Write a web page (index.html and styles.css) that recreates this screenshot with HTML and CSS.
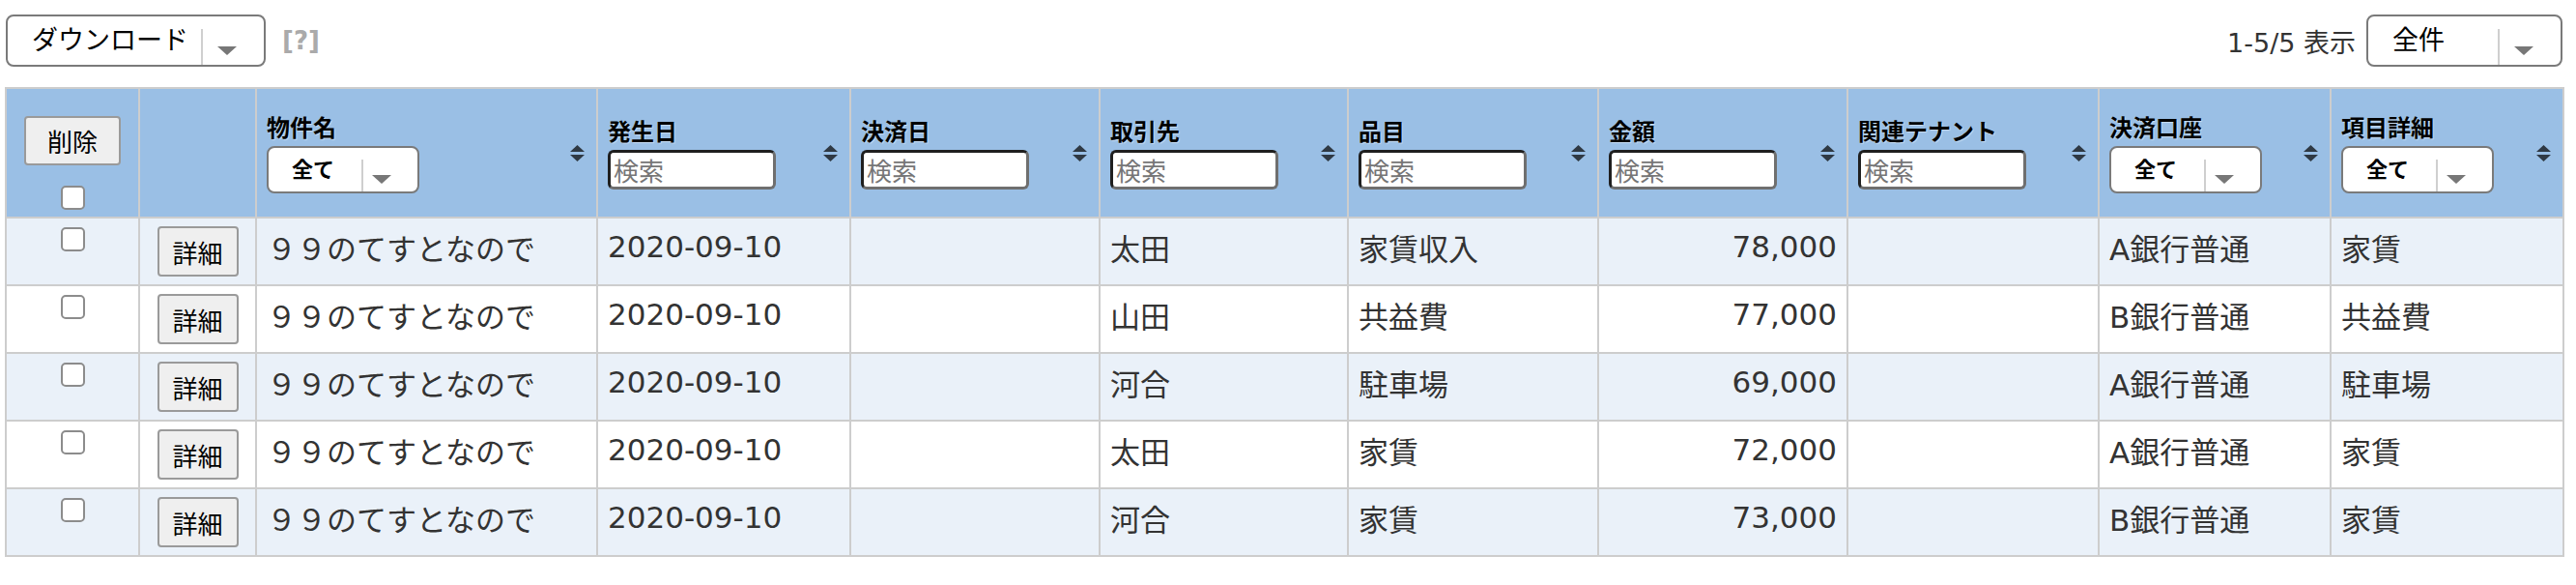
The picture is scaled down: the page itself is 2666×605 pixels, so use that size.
FILE: index.html
```html
<!DOCTYPE html>
<html lang="ja">
<head>
<meta charset="utf-8">
<title>一覧</title>
<link rel="stylesheet" href="styles.css">
</head>
<body>
<div class="page">
  <div class="toolbar">
    <div class="tb-left">
      <div class="dropdown dl"><span class="dd-text">ダウンロード</span><span class="dd-arrow"></span></div>
      <span class="help">[?]</span>
    </div>
    <div class="tb-right">
      <span class="count">1-5/5 表示</span>
      <div class="dropdown all"><span class="dd-text">全件</span><span class="dd-arrow"></span></div>
    </div>
  </div>

  <table class="grid">
    <colgroup>
      <col class="w1"><col class="w2"><col class="w3"><col class="w4"><col class="w5"><col class="w6">
      <col class="w7"><col class="w8"><col class="w9"><col class="w10"><col class="w11">
    </colgroup>
    <thead>
      <tr>
        <th class="c-check"><div class="check-stack"><button class="btn btn-del">削除</button><input type="checkbox" class="cb"></div></th>
        <th></th>
        <th><div class="th-inner"><div class="filter"><span class="label">物件名</span><div class="sel"><span class="sel-text">全て</span><span class="sel-arrow"></span></div></div><svg class="sort" width="15" height="17" viewBox="0 0 15 17"><polygon points="0,7 7.5,0 15,7"/><polygon points="0,10 7.5,17 15,10"/></svg></div></th>
        <th><div class="th-inner"><div class="filter"><span class="label">発生日</span><input class="search" placeholder="検索"></div><svg class="sort" width="15" height="17" viewBox="0 0 15 17"><polygon points="0,7 7.5,0 15,7"/><polygon points="0,10 7.5,17 15,10"/></svg></div></th>
        <th><div class="th-inner"><div class="filter"><span class="label">決済日</span><input class="search" placeholder="検索"></div><svg class="sort" width="15" height="17" viewBox="0 0 15 17"><polygon points="0,7 7.5,0 15,7"/><polygon points="0,10 7.5,17 15,10"/></svg></div></th>
        <th><div class="th-inner"><div class="filter"><span class="label">取引先</span><input class="search" placeholder="検索"></div><svg class="sort" width="15" height="17" viewBox="0 0 15 17"><polygon points="0,7 7.5,0 15,7"/><polygon points="0,10 7.5,17 15,10"/></svg></div></th>
        <th><div class="th-inner"><div class="filter"><span class="label">品目</span><input class="search" placeholder="検索"></div><svg class="sort" width="15" height="17" viewBox="0 0 15 17"><polygon points="0,7 7.5,0 15,7"/><polygon points="0,10 7.5,17 15,10"/></svg></div></th>
        <th><div class="th-inner"><div class="filter"><span class="label">金額</span><input class="search" placeholder="検索"></div><svg class="sort" width="15" height="17" viewBox="0 0 15 17"><polygon points="0,7 7.5,0 15,7"/><polygon points="0,10 7.5,17 15,10"/></svg></div></th>
        <th><div class="th-inner"><div class="filter"><span class="label">関連テナント</span><input class="search" placeholder="検索"></div><svg class="sort" width="15" height="17" viewBox="0 0 15 17"><polygon points="0,7 7.5,0 15,7"/><polygon points="0,10 7.5,17 15,10"/></svg></div></th>
        <th><div class="th-inner"><div class="filter"><span class="label">決済口座</span><div class="sel"><span class="sel-text">全て</span><span class="sel-arrow"></span></div></div><svg class="sort" width="15" height="17" viewBox="0 0 15 17"><polygon points="0,7 7.5,0 15,7"/><polygon points="0,10 7.5,17 15,10"/></svg></div></th>
        <th><div class="th-inner"><div class="filter"><span class="label">項目詳細</span><div class="sel"><span class="sel-text">全て</span><span class="sel-arrow"></span></div></div><svg class="sort" width="15" height="17" viewBox="0 0 15 17"><polygon points="0,7 7.5,0 15,7"/><polygon points="0,10 7.5,17 15,10"/></svg></div></th>
      </tr>
    </thead>
    <tbody>
      <tr>
        <td class="c-check"><input type="checkbox" class="cb"></td>
        <td class="c-btn"><button class="btn btn-detail">詳細</button></td>
        <td>９９のてすとなので</td><td>2020-09-10</td><td></td><td>太田</td><td>家賃収入</td><td class="num">78,000</td><td></td><td>A銀行普通</td><td>家賃</td>
      </tr>
      <tr>
        <td class="c-check"><input type="checkbox" class="cb"></td>
        <td class="c-btn"><button class="btn btn-detail">詳細</button></td>
        <td>９９のてすとなので</td><td>2020-09-10</td><td></td><td>山田</td><td>共益費</td><td class="num">77,000</td><td></td><td>B銀行普通</td><td>共益費</td>
      </tr>
      <tr>
        <td class="c-check"><input type="checkbox" class="cb"></td>
        <td class="c-btn"><button class="btn btn-detail">詳細</button></td>
        <td>９９のてすとなので</td><td>2020-09-10</td><td></td><td>河合</td><td>駐車場</td><td class="num">69,000</td><td></td><td>A銀行普通</td><td>駐車場</td>
      </tr>
      <tr>
        <td class="c-check"><input type="checkbox" class="cb"></td>
        <td class="c-btn"><button class="btn btn-detail">詳細</button></td>
        <td>９９のてすとなので</td><td>2020-09-10</td><td></td><td>太田</td><td>家賃</td><td class="num">72,000</td><td></td><td>A銀行普通</td><td>家賃</td>
      </tr>
      <tr>
        <td class="c-check"><input type="checkbox" class="cb"></td>
        <td class="c-btn"><button class="btn btn-detail">詳細</button></td>
        <td>９９のてすとなので</td><td>2020-09-10</td><td></td><td>河合</td><td>家賃</td><td class="num">73,000</td><td></td><td>B銀行普通</td><td>家賃</td>
      </tr>
    </tbody>
  </table>
</div>
</body>
</html>
```

FILE: styles.css
```css
* { box-sizing: border-box; }

body {
  margin: 0;
  background: #fff;
  font-family: "DejaVu Sans", "Noto Sans CJK JP", sans-serif;
  color: #333;
}

.page {
  width: 2666px;
  padding: 15px 14px 0 5px;
}

/* toolbar */
.toolbar {
  display: flex;
  justify-content: space-between;
  align-items: center;
  height: 54px;
  margin-bottom: 21px;
}
.tb-left { display: flex; align-items: center; gap: 17px; padding-left: 1px; }
.tb-right { display: flex; align-items: center; gap: 11px; }

.dropdown {
  display: flex;
  height: 54px;
  border: 2px solid #7a7a7a;
  border-radius: 8px;
  background: #fff;
}
.dl { width: 269px; }
.all { width: 203px; }
.dd-text {
  flex: 1;
  padding-left: 25px;
  font-family: "Noto Sans CJK JP", sans-serif;
  font-size: 27px;
  line-height: 46px;
  color: #000;
}
.dd-arrow {
  width: 65px;
  margin-top: 13px;
  border-left: 2px solid #cfcfcf;
  padding: 18px 0 0 15px;
}
.dd-arrow::before,
.sel-arrow::before {
  content: "";
  display: block;
  width: 0;
  height: 0;
  border-left: 10px solid transparent;
  border-right: 10px solid transparent;
  border-top: 9px solid #777;
}
.help {
  font-family: "DejaVu Sans", sans-serif;
  font-weight: bold;
  font-size: 26px;
  color: #aaa;
}
.count {
  font-size: 27px;
  color: #333;
}

/* table */
.grid {
  border-collapse: collapse;
  table-layout: fixed;
  width: 2647px;
}
.w1 { width: 138px; }
.w2 { width: 121px; }
.w3 { width: 353px; }
.w4 { width: 262px; }
.w5 { width: 258px; }
.w6 { width: 257px; }
.w7 { width: 259px; }
.w8 { width: 258px; }
.w9 { width: 260px; }
.w10 { width: 240px; }
.w11 { width: 241px; }

.grid th,
.grid td {
  border: 2px solid #cdcdcd;
}

.grid th {
  background: #9abfe5;
  height: 134px;
  padding: 0 12px 0 10px;
  vertical-align: middle;
  text-align: left;
  font-weight: normal;
}
.th-inner {
  display: flex;
  align-items: center;
  justify-content: space-between;
}
.filter {
  display: flex;
  flex-direction: column;
  align-items: flex-start;
  gap: 5px;
}
.label {
  font-family: "Noto Sans CJK JP", sans-serif;
  font-size: 24px;
  font-weight: bold;
  line-height: 30px;
  color: #000;
  text-shadow: 1px 1px 1px rgba(255, 255, 255, 0.45);
}
.sort { fill: #2f3944; flex: none; }

.sel {
  display: flex;
  width: 158px;
  height: 49px;
  border: 2px solid #7a7a7a;
  border-radius: 8px;
  background: #fff;
}
.sel-text {
  flex: 1;
  padding-left: 24px;
  font-family: "Noto Sans CJK JP", sans-serif;
  font-size: 22px;
  font-weight: bold;
  line-height: 40px;
  color: #000;
}
.sel-arrow {
  width: 58px;
  margin-top: 12px;
  border-left: 2px solid #cfcfcf;
  padding: 16px 0 0 9px;
}

.search {
  width: 174px;
  height: 41px;
  border: 3px solid;
  border-color: #1f1f1f #6f6f6f #6f6f6f #1f1f1f;
  border-radius: 6px;
  padding: 0 3px;
  background: #fff;
  font-family: "Noto Sans CJK JP", sans-serif;
  font-size: 26px;
  color: #333;
}
.search::placeholder { color: #767676; }

.btn {
  background: #efefef;
  border: 2px solid #9a9a9a;
  border-radius: 4px;
  font-family: "Noto Sans CJK JP", sans-serif;
  font-size: 26px;
  color: #000;
  padding: 0;
}
.btn-del { width: 100px; height: 51px; }
.btn-detail { width: 84px; height: 52px; }

.cb {
  appearance: none;
  -webkit-appearance: none;
  display: block;
  width: 25px;
  height: 25px;
  margin: 0 auto;
  border: 2px solid #8c8c8c;
  border-radius: 5px;
  background: #fff;
}

.grid th.c-check {
  padding: 0 0 7px;
  vertical-align: bottom;
}
.check-stack {
  display: flex;
  flex-direction: column;
  align-items: center;
  gap: 21px;
}

.grid td {
  height: 70px;
  padding: 0 10px 10px;
  font-size: 31px;
  color: #333;
  vertical-align: middle;
  white-space: nowrap;
}
.grid tbody tr:nth-child(odd) td { background: #eaf1f9; }
.grid td.c-check { vertical-align: top; padding-top: 9px; }
.grid td.c-btn { text-align: center; padding: 0; }
.grid td.num { text-align: right; }
```
